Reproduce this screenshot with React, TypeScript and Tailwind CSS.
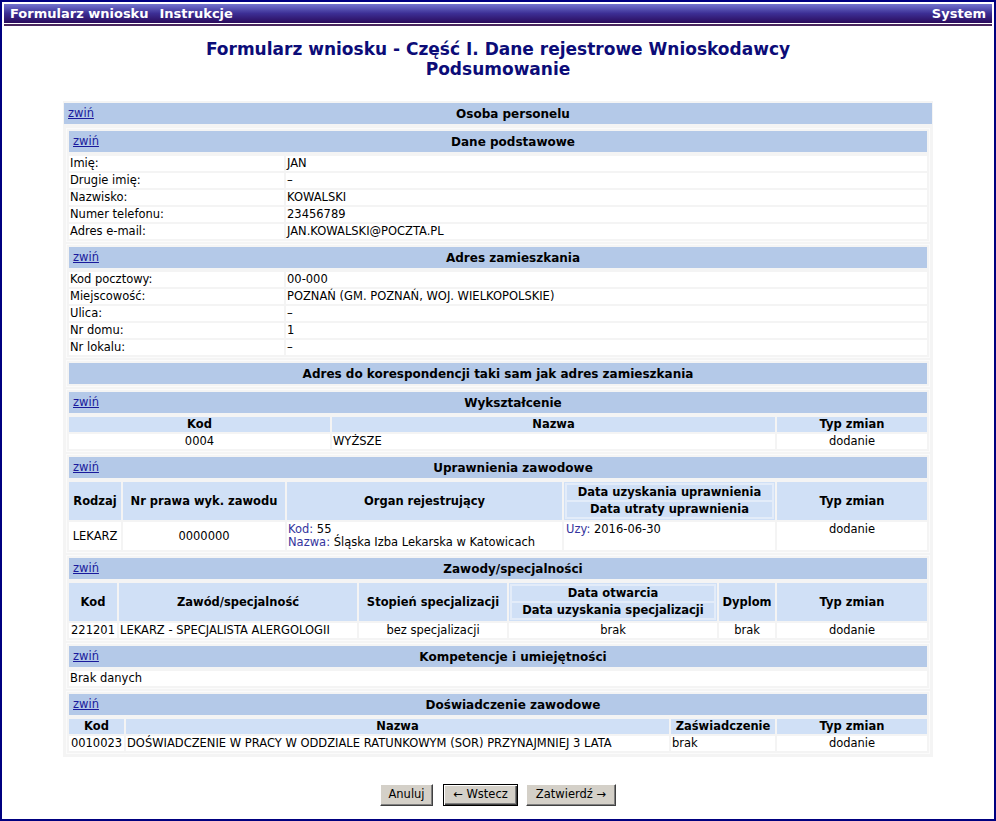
import type { ReactNode } from 'react';

// Header row of each collapsible block
function SectionHeader({ title, toggle = true, gapBelow = true }: { title: string; toggle?: boolean; gapBelow?: boolean }) {
  return (
    <div className={'col-span-full flex h-[21px] items-center bg-[#b4c9e8]' + (gapBelow ? ' mb-[2px]' : '')}>
      {toggle && (
        <a href="#" className="w-[30px] shrink-0 pl-[4px] text-[#1a1a9c] underline">
          zwiń
        </a>
      )}
      <div className="flex-1 text-center text-[12px] font-bold">{title}</div>
    </div>
  );
}

function Th({ children }: { children: ReactNode }) {
  return (
    <div className="flex items-center justify-center bg-[#d0e0f6] px-[1px] text-center font-bold leading-[15px]">
      {children}
    </div>
  );
}

function Td({ children, align = 'left', top = false }: { children: ReactNode; align?: 'left' | 'center'; top?: boolean }) {
  return (
    <div
      className={
        'flex bg-white px-[1px] leading-[15px] ' +
        (align === 'center' ? 'justify-center text-center ' : 'justify-start ') +
        (top ? 'items-start' : 'items-center')
      }
    >
      <div>{children}</div>
    </div>
  );
}

// Two stacked header labels nested in one column
function DoubleTh({ first, second }: { first: string; second: string }) {
  return (
    <div className="flex items-center bg-[#d0e0f6] px-[1px] py-[1px]">
      <div className="flex w-full flex-col gap-[2px] bg-[#e3ecf9] p-[2px]">
        <div className="bg-[#d0e0f6] text-center font-bold leading-[15px]">{first}</div>
        <div className="bg-[#d0e0f6] text-center font-bold leading-[15px]">{second}</div>
      </div>
    </div>
  );
}

const Label = ({ children }: { children: ReactNode }) => <span className="text-[#35359e]">{children}</span>;

const personal = [
  ['Imię:', 'JAN'],
  ['Drugie imię:', '–'],
  ['Nazwisko:', 'KOWALSKI'],
  ['Numer telefonu:', '23456789'],
  ['Adres e-mail:', 'JAN.KOWALSKI@POCZTA.PL'],
];

const address = [
  ['Kod pocztowy:', '00-000'],
  ['Miejscowość:', 'POZNAŃ (GM. POZNAŃ, WOJ. WIELKOPOLSKIE)'],
  ['Ulica:', '–'],
  ['Nr domu:', '1'],
  ['Nr lokalu:', '–'],
];

export default function App() {
  return (
    <div className="h-[821px] w-[996px] border-2 border-[#000080] bg-white p-[2px] font-['DejaVu_Sans',Verdana,sans-serif] text-[11.5px] text-black">
      {/* top menu bar */}
      <div className="flex h-[19px] items-center justify-between bg-linear-to-b from-[#7474d0] via-[#3c2e94] to-[#2a0a5c] px-[6px] text-[13px] font-bold text-white">
        <div className="flex gap-[11px]">
          <span>Formularz wniosku</span>
          <span>Instrukcje</span>
        </div>
        <span>System</span>
      </div>
      <div className="mt-[1px] h-[2px] bg-[#48265e]" />

      <h1 className="pt-[13px] text-center text-[17px] leading-[20px] font-bold text-[#0c0c78]">
        Formularz wniosku - Część I. Dane rejestrowe Wnioskodawcy
        <br />
        Podsumowanie
      </h1>

      <div className="mx-auto mt-[22px] flex w-[870px] flex-col gap-[2px] bg-[#f4f4f4] px-[1px] pt-[2px] pb-[1px]">
        <SectionHeader title="Osoba personelu" gapBelow={false} />
        <div className="flex flex-col gap-[2px] p-[2px]">
          <div className="grid grid-cols-[215px_1fr] gap-[2px] border border-[#fbfbfb] p-[2px]">
            <SectionHeader title="Dane podstawowe" />
            {personal.map(([k, v]) => (
              <div key={k} className="contents">
                <Td>{k}</Td>
                <Td>{v}</Td>
              </div>
            ))}
          </div>

          <div className="grid grid-cols-[215px_1fr] gap-[2px] border border-[#fbfbfb] p-[2px]">
            <SectionHeader title="Adres zamieszkania" />
            {address.map(([k, v]) => (
              <div key={k} className="contents">
                <Td>{k}</Td>
                <Td>{v}</Td>
              </div>
            ))}
          </div>

          <div className="grid gap-[2px] border border-[#fbfbfb] p-[2px]">
            <SectionHeader title="Adres do korespondencji taki sam jak adres zamieszkania" toggle={false} gapBelow={false} />
          </div>

          <div className="grid grid-cols-[261px_443px_1fr] gap-[2px] border border-[#fbfbfb] p-[2px]">
            <SectionHeader title="Wykształcenie" />
            <Th>Kod</Th>
            <Th>Nazwa</Th>
            <Th>Typ zmian</Th>
            <Td align="center">0004</Td>
            <Td>WYŻSZE</Td>
            <Td align="center">dodanie</Td>
          </div>

          <div className="grid grid-cols-[52px_162px_275px_211px_1fr] gap-[2px] border border-[#fbfbfb] p-[2px]">
            <SectionHeader title="Uprawnienia zawodowe" />
            <Th>Rodzaj</Th>
            <Th>Nr prawa wyk. zawodu</Th>
            <Th>Organ rejestrujący</Th>
            <DoubleTh first="Data uzyskania uprawnienia" second="Data utraty uprawnienia" />
            <Th>Typ zmian</Th>
            <div className="flex items-center justify-center bg-white leading-[13px]">LEKARZ</div>
            <div className="flex items-center justify-center bg-white leading-[13px]">0000000</div>
            <div className="bg-white px-[1px] py-[1px] leading-[13px]">
              <div>
                <Label>Kod:</Label> 55
              </div>
              <div>
                <Label>Nazwa:</Label> Śląska Izba Lekarska w Katowicach
              </div>
            </div>
            <div className="bg-white px-[2px] py-[1px] leading-[13px]">
              <Label>Uzy:</Label> 2016-06-30
            </div>
            <div className="bg-white py-[1px] text-center leading-[13px]">dodanie</div>
          </div>

          <div className="grid grid-cols-[48px_238px_148px_208px_56px_1fr] gap-[2px] border border-[#fbfbfb] p-[2px]">
            <SectionHeader title="Zawody/specjalności" />
            <Th>Kod</Th>
            <Th>Zawód/specjalność</Th>
            <Th>Stopień specjalizacji</Th>
            <DoubleTh first="Data otwarcia" second="Data uzyskania specjalizacji" />
            <Th>Dyplom</Th>
            <Th>Typ zmian</Th>
            <Td align="center">221201</Td>
            <Td>LEKARZ - SPECJALISTA ALERGOLOGII</Td>
            <Td align="center">bez specjalizacji</Td>
            <Td align="center">brak</Td>
            <Td align="center">brak</Td>
            <Td align="center">dodanie</Td>
          </div>

          <div className="grid grid-cols-[1fr] gap-[2px] border border-[#fbfbfb] p-[2px]">
            <SectionHeader title="Kompetencje i umiejętności" />
            <Td>Brak danych</Td>
          </div>

          <div className="grid grid-cols-[55px_543px_104px_1fr] gap-[2px] border border-[#fbfbfb] p-[2px]">
            <SectionHeader title="Doświadczenie zawodowe" />
            <Th>Kod</Th>
            <Th>Nazwa</Th>
            <Th>Zaświadczenie</Th>
            <Th>Typ zmian</Th>
            <Td align="center">0010023</Td>
            <Td>DOŚWIADCZENIE W PRACY W ODDZIALE RATUNKOWYM (SOR) PRZYNAJMNIEJ 3 LATA</Td>
            <Td>brak</Td>
            <Td align="center">dodanie</Td>
          </div>
        </div>
      </div>

      <div className="mt-[27px] flex justify-center">
        <button className="mr-[10px] h-[22px] w-[53px] border border-t-white border-r-[#404040] border-b-[#404040] border-l-white bg-[#d4d0c8] text-[11.5px] shadow-[inset_-1px_-1px_#808080]">
          Anuluj
        </button>
        <button className="mr-[8px] h-[22px] w-[75px] border border-black bg-[#d4d0c8] text-[11.5px] shadow-[inset_1px_1px_#fff,inset_-1px_-1px_#404040,inset_-2px_-2px_#808080]">
          ← Wstecz
        </button>
        <button className="h-[22px] w-[90px] border border-t-white border-r-[#404040] border-b-[#404040] border-l-white bg-[#d4d0c8] text-[11.5px] shadow-[inset_-1px_-1px_#808080]">
          Zatwierdź →
        </button>
      </div>
    </div>
  );
}
